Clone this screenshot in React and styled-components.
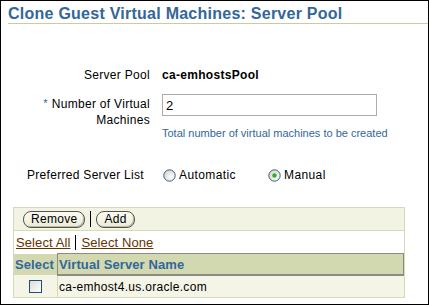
import styled, { createGlobalStyle } from "styled-components";

const GlobalStyle = createGlobalStyle`
  html, body {
    margin: 0;
    padding: 0;
    background: #ffffff;
  }
  body {
    font-family: "Liberation Sans", Arial, sans-serif;
    font-size: 12px;
    letter-spacing: 0.3px;
    color: #000000;
  }
`;

const Frame = styled.div`
  box-sizing: border-box;
  width: 429px;
  height: 305px;
  border: 1px solid #000000;
  padding-left: 7px;
  overflow: hidden;
`;

const Title = styled.h1`
  margin: 0;
  padding-top: 3px;
  font-size: 16px;
  line-height: 19px;
  font-weight: bold;
  letter-spacing: 0.25px;
  color: #336699;
  border-bottom: 1px solid #cccc99;
`;

const Form = styled.div`
  display: flex;
  flex-direction: column;
  padding-top: 43px;
`;

const Row = styled.div`
  display: flex;
  align-items: flex-start;
  gap: ${(p) => p.$gap || 12}px;
  margin-top: ${(p) => p.$top || 0}px;
`;

const Label = styled.div`
  width: ${(p) => p.$width || 142}px;
  flex: none;
  text-align: right;
  line-height: 16px;
  padding-top: ${(p) => p.$padTop || 0}px;
`;

const Star = styled.span`
  color: #336699;
  font-size: 11px;
  margin-right: 4px;
  vertical-align: 1px;
`;

const Value = styled.div`
  display: flex;
  flex-direction: column;
  line-height: 16px;
  font-weight: ${(p) => (p.$bold ? "bold" : "normal")};
`;

const TextInput = styled.input`
  box-sizing: border-box;
  width: 215px;
  height: 22px;
  margin: 0;
  border: 1px solid #a5acb2;
  padding: 1px 3px 0;
  font-family: "Liberation Sans", Arial, sans-serif;
  font-size: 13px;
  color: #000000;
  outline: none;
`;

const Help = styled.div`
  margin-top: 10px;
  font-size: 11px;
  line-height: 14px;
  letter-spacing: 0;
  color: #336699;
`;

const RadioGroup = styled.div`
  display: flex;
  align-items: center;
  line-height: 16px;
  letter-spacing: 0.4px;
`;

const RadioOption = styled.label`
  display: flex;
  align-items: center;
  gap: 3px;
  width: ${(p) => p.$width || "auto"};
  padding-left: 1px;
`;

const TableBox = styled.div`
  box-sizing: border-box;
  width: 392px;
  margin: 24px 0 0 5px;
  border: 1px solid #d6dbb6;
`;

const Toolbar = styled.div`
  display: flex;
  align-items: center;
  height: 22px;
  padding-left: 9px;
  background: #f2f3e2;
  border-bottom: 1px solid #d6dbb6;
`;

const Button = styled.button`
  height: 17px;
  margin: 0;
  padding: 0 7px;
  border: 1px solid #55554a;
  border-radius: 8px;
  background: linear-gradient(#fbfbf4, #ebebd8);
  box-shadow: inset -1px -1px 0 #b9b9a6;
  font-family: "Liberation Sans", Arial, sans-serif;
  font-size: 12px;
  line-height: 14px;
  letter-spacing: 0.3px;
  color: #000000;
`;

const Sep = styled.span`
  display: inline-block;
  width: 1px;
  height: ${(p) => p.$h || 16}px;
  background: #000000;
  margin: 0 ${(p) => p.$space || 5}px;
`;

const SelectBar = styled.div`
  display: flex;
  align-items: center;
  height: 22px;
  padding-left: 2px;
  background: #ffffff;
  font-size: 13px;
  letter-spacing: 0.1px;
`;

const Link = styled.a`
  color: #663300;
  text-decoration: underline;
  cursor: pointer;
`;

const Table = styled.table`
  width: 100%;
  border-collapse: collapse;
  border-spacing: 0;
`;

const HeadCell = styled.th`
  height: 20px;
  padding: 0 0 0 1px;
  background: #d2d9b1;
  color: #336699;
  font-weight: bold;
  font-size: 13px;
  text-align: left;
  letter-spacing: 0.1px;
  width: ${(p) => p.$width || "auto"};
  border: ${(p) => (p.$sorted ? "1px solid #8c8c84" : "none")};
  border-bottom-width: ${(p) => (p.$sorted ? 2 : 0)}px;
`;

const Cell = styled.td`
  height: 21px;
  padding: 0 0 0 ${(p) => p.$pad || 0}px;
  background: #f4f5e6;
  text-align: ${(p) => p.$align || "left"};
  border-right: ${(p) => (p.$divider ? "1px solid #d6dbb6" : "none")};
  letter-spacing: 0.3px;
`;

function Radio({ checked }) {
  return (
    <svg width="13" height="13" viewBox="0 0 13 13">
      <defs>
        <radialGradient id="rg" cx="0.65" cy="0.65" r="0.7">
          <stop offset="0" stopColor="#ffffff" />
          <stop offset="1" stopColor="#d6d6cc" />
        </radialGradient>
      </defs>
      <circle cx="6.5" cy="6.5" r="5.7" fill="url(#rg)" stroke="#3c5f86" strokeWidth="1" />
      {checked && <circle cx="6.5" cy="6.5" r="2.2" fill="#2eb12e" />}
    </svg>
  );
}

function Checkbox() {
  return (
    <svg width="13" height="13" viewBox="0 0 13 13" style={{ display: "block", margin: "0 auto" }}>
      <defs>
        <linearGradient id="cg" x1="0" y1="0" x2="1" y2="1">
          <stop offset="0" stopColor="#dcdcd4" />
          <stop offset="1" stopColor="#ffffff" />
        </linearGradient>
      </defs>
      <rect x="0.5" y="0.5" width="12" height="12" fill="url(#cg)" stroke="#1c4f7e" />
    </svg>
  );
}

export default function App() {
  return (
    <>
      <GlobalStyle />
      <Frame>
        <Title>Clone Guest Virtual Machines: Server Pool</Title>
        <Form>
          <Row>
            <Label>Server Pool</Label>
            <Value $bold>ca-emhostsPool</Value>
          </Row>
          <Row $top={11}>
            <Label $padTop={1}>
              <Star>*</Star>Number of Virtual Machines
            </Label>
            <Value>
              <TextInput defaultValue="2" />
              <Help>Total number of virtual machines to be created</Help>
            </Value>
          </Row>
          <Row $top={27} $gap={18}>
            <Label $width={136}>Preferred Server List</Label>
            <RadioGroup>
              <RadioOption $width="104px">
                <Radio />
                Automatic
              </RadioOption>
              <RadioOption>
                <Radio checked />
                Manual
              </RadioOption>
            </RadioGroup>
          </Row>
        </Form>
        <TableBox>
          <Toolbar>
            <Button>Remove</Button>
            <Sep $space={5} />
            <Button>Add</Button>
          </Toolbar>
          <SelectBar>
            <Link>Select All</Link>
            <Sep $h={15} $space={5} />
            <Link>Select None</Link>
          </SelectBar>
          <Table>
            <thead>
              <tr>
                <HeadCell $width="42px">Select</HeadCell>
                <HeadCell $sorted>Virtual Server Name</HeadCell>
              </tr>
            </thead>
            <tbody>
              <tr>
                <Cell $align="center" $divider>
                  <Checkbox />
                </Cell>
                <Cell $pad={1}>ca-emhost4.us.oracle.com</Cell>
              </tr>
            </tbody>
          </Table>
        </TableBox>
      </Frame>
    </>
  );
}
